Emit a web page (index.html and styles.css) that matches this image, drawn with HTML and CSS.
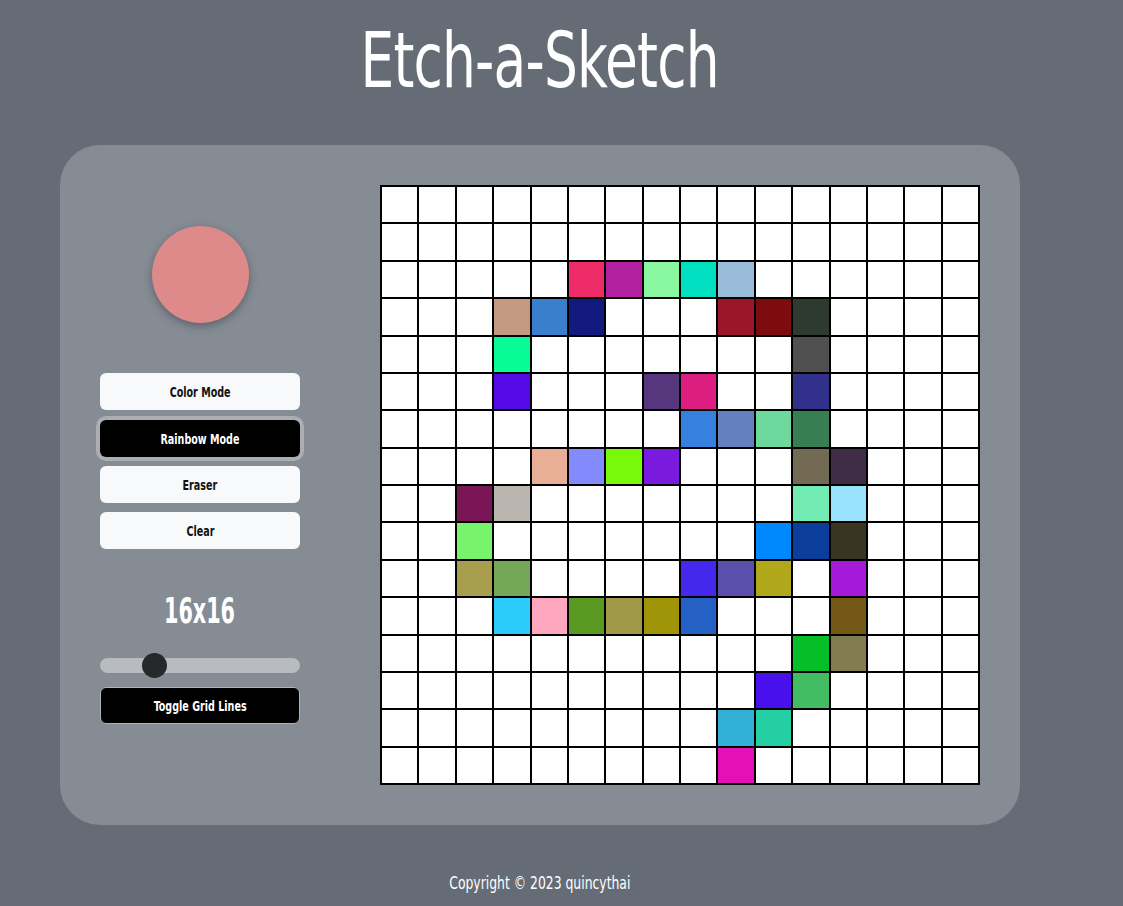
FILE: index.html
```html
<!DOCTYPE html>
<html lang="en">
<head>
<meta charset="utf-8">
<title>Etch-a-Sketch</title>
<link rel="stylesheet" href="styles.css">
</head>
<body>
<div class="page">
  <h1 class="title">Etch-a-Sketch</h1>
  <main class="panel">
    <section class="controls">
      <div class="swatch"></div>
      <div class="buttons">
        <button class="btn"><span class="lbl">Color Mode</span></button>
        <button class="btn active"><span class="lbl">Rainbow Mode</span></button>
        <button class="btn"><span class="lbl">Eraser</span></button>
        <button class="btn"><span class="lbl">Clear</span></button>
      </div>
      <div class="size-label">16x16</div>
      <input class="slider" type="range" min="1" max="64" value="16">
      <button class="btn toggle"><span class="lbl">Toggle Grid Lines</span></button>
    </section>
    <section class="grid">
      <div class="c"></div><div class="c"></div><div class="c"></div><div class="c"></div><div class="c"></div><div class="c"></div><div class="c"></div><div class="c"></div><div class="c"></div><div class="c"></div><div class="c"></div><div class="c"></div><div class="c"></div><div class="c"></div><div class="c"></div><div class="c"></div>
      <div class="c"></div><div class="c"></div><div class="c"></div><div class="c"></div><div class="c"></div><div class="c"></div><div class="c"></div><div class="c"></div><div class="c"></div><div class="c"></div><div class="c"></div><div class="c"></div><div class="c"></div><div class="c"></div><div class="c"></div><div class="c"></div>
      <div class="c"></div><div class="c"></div><div class="c"></div><div class="c"></div><div class="c"></div><div class="c" style="background:#ed2b68"></div><div class="c" style="background:#b3209f"></div><div class="c" style="background:#88f7a0"></div><div class="c" style="background:#00dfc0"></div><div class="c" style="background:#99bcdb"></div><div class="c"></div><div class="c"></div><div class="c"></div><div class="c"></div><div class="c"></div><div class="c"></div>
      <div class="c"></div><div class="c"></div><div class="c"></div><div class="c" style="background:#c49b81"></div><div class="c" style="background:#3a7fcb"></div><div class="c" style="background:#12197f"></div><div class="c"></div><div class="c"></div><div class="c"></div><div class="c" style="background:#9b1629"></div><div class="c" style="background:#7e0c0f"></div><div class="c" style="background:#2f3a2e"></div><div class="c"></div><div class="c"></div><div class="c"></div><div class="c"></div>
      <div class="c"></div><div class="c"></div><div class="c"></div><div class="c" style="background:#08fb94"></div><div class="c"></div><div class="c"></div><div class="c"></div><div class="c"></div><div class="c"></div><div class="c"></div><div class="c"></div><div class="c" style="background:#505050"></div><div class="c"></div><div class="c"></div><div class="c"></div><div class="c"></div>
      <div class="c"></div><div class="c"></div><div class="c"></div><div class="c" style="background:#5409e6"></div><div class="c"></div><div class="c"></div><div class="c"></div><div class="c" style="background:#56377d"></div><div class="c" style="background:#db1e80"></div><div class="c"></div><div class="c"></div><div class="c" style="background:#31308a"></div><div class="c"></div><div class="c"></div><div class="c"></div><div class="c"></div>
      <div class="c"></div><div class="c"></div><div class="c"></div><div class="c"></div><div class="c"></div><div class="c"></div><div class="c"></div><div class="c"></div><div class="c" style="background:#3680df"></div><div class="c" style="background:#6480bf"></div><div class="c" style="background:#6ed99c"></div><div class="c" style="background:#377e53"></div><div class="c"></div><div class="c"></div><div class="c"></div><div class="c"></div>
      <div class="c"></div><div class="c"></div><div class="c"></div><div class="c"></div><div class="c" style="background:#e9ae96"></div><div class="c" style="background:#838afb"></div><div class="c" style="background:#78f909"></div><div class="c" style="background:#7a1ade"></div><div class="c"></div><div class="c"></div><div class="c"></div><div class="c" style="background:#736a54"></div><div class="c" style="background:#3e2d44"></div><div class="c"></div><div class="c"></div><div class="c"></div>
      <div class="c"></div><div class="c"></div><div class="c" style="background:#7a1656"></div><div class="c" style="background:#bab6af"></div><div class="c"></div><div class="c"></div><div class="c"></div><div class="c"></div><div class="c"></div><div class="c"></div><div class="c"></div><div class="c" style="background:#72ecb2"></div><div class="c" style="background:#99e2fe"></div><div class="c"></div><div class="c"></div><div class="c"></div>
      <div class="c"></div><div class="c"></div><div class="c" style="background:#78f36c"></div><div class="c"></div><div class="c"></div><div class="c"></div><div class="c"></div><div class="c"></div><div class="c"></div><div class="c"></div><div class="c" style="background:#0088ff"></div><div class="c" style="background:#0b3e9c"></div><div class="c" style="background:#3a3522"></div><div class="c"></div><div class="c"></div><div class="c"></div>
      <div class="c"></div><div class="c"></div><div class="c" style="background:#a89e4e"></div><div class="c" style="background:#74a857"></div><div class="c"></div><div class="c"></div><div class="c"></div><div class="c"></div><div class="c" style="background:#4429ed"></div><div class="c" style="background:#5a4fab"></div><div class="c" style="background:#b0a71a"></div><div class="c"></div><div class="c" style="background:#a519db"></div><div class="c"></div><div class="c"></div><div class="c"></div>
      <div class="c"></div><div class="c"></div><div class="c"></div><div class="c" style="background:#2bcbfb"></div><div class="c" style="background:#fea7be"></div><div class="c" style="background:#5a9a22"></div><div class="c" style="background:#a09a48"></div><div class="c" style="background:#a09508"></div><div class="c" style="background:#2560c4"></div><div class="c"></div><div class="c"></div><div class="c"></div><div class="c" style="background:#745815"></div><div class="c"></div><div class="c"></div><div class="c"></div>
      <div class="c"></div><div class="c"></div><div class="c"></div><div class="c"></div><div class="c"></div><div class="c"></div><div class="c"></div><div class="c"></div><div class="c"></div><div class="c"></div><div class="c"></div><div class="c" style="background:#06bf28"></div><div class="c" style="background:#827a50"></div><div class="c"></div><div class="c"></div><div class="c"></div>
      <div class="c"></div><div class="c"></div><div class="c"></div><div class="c"></div><div class="c"></div><div class="c"></div><div class="c"></div><div class="c"></div><div class="c"></div><div class="c"></div><div class="c" style="background:#4710ed"></div><div class="c" style="background:#43bd64"></div><div class="c"></div><div class="c"></div><div class="c"></div><div class="c"></div>
      <div class="c"></div><div class="c"></div><div class="c"></div><div class="c"></div><div class="c"></div><div class="c"></div><div class="c"></div><div class="c"></div><div class="c"></div><div class="c" style="background:#33b0d6"></div><div class="c" style="background:#25cfa4"></div><div class="c"></div><div class="c"></div><div class="c"></div><div class="c"></div><div class="c"></div>
      <div class="c"></div><div class="c"></div><div class="c"></div><div class="c"></div><div class="c"></div><div class="c"></div><div class="c"></div><div class="c"></div><div class="c"></div><div class="c" style="background:#e411b6"></div><div class="c"></div><div class="c"></div><div class="c"></div><div class="c"></div><div class="c"></div><div class="c"></div>
    </section>
  </main>
  <footer class="footer">Copyright © 2023 quincythai</footer>
</div>
</body>
</html>
```

FILE: styles.css
```css
* { box-sizing: border-box; }

html, body {
  margin: 0;
  padding: 0;
  background: #666c76;
  height: 100%;
}

body {
  font-family: "DejaVu Sans Condensed", "DejaVu Sans", sans-serif;
  color: #fff;
  overflow: hidden;
}

.page {
  width: 1080px;
  display: flex;
  flex-direction: column;
  align-items: center;
}

.title {
  margin: 18px 0 0;
  height: 127px;
  font-size: 76px;
  font-weight: normal;
  line-height: 86px;
  letter-spacing: -1px;
  transform: scaleX(0.78);
}

.panel {
  width: 960px;
  height: 680px;
  background: #868c94;
  border-radius: 40px;
  padding: 40px;
  display: flex;
  gap: 80px;
}

.controls {
  width: 200px;
  display: flex;
  flex-direction: column;
  align-items: center;
  padding-top: 41px;
}

.swatch {
  width: 97px;
  height: 97px;
  border-radius: 50%;
  background: #de8a8a;
  box-shadow: 0 3px 8px rgba(40, 45, 55, 0.45);
  margin-bottom: 50px;
}

.buttons {
  width: 200px;
  display: flex;
  flex-direction: column;
  gap: 9px;
}

.btn {
  width: 200px;
  height: 37px;
  border: none;
  border-radius: 6px;
  background: #f8f9fa;
  color: #111;
  font-family: inherit;
  font-size: 14px;
  font-weight: bold;
  padding: 0;
}

.lbl {
  display: inline-block;
  transform: scaleX(0.76);
  white-space: nowrap;
}

.btn.active {
  background: #000;
  color: #fff;
  box-shadow: 0 0 0 4px #abaeb2;
  margin-top: 1px;
}

.size-label {
  margin-top: 42px;
  font-size: 36px;
  font-weight: bold;
  line-height: 40px;
  transform: scaleX(0.64);
}

.slider {
  -webkit-appearance: none;
  appearance: none;
  width: 200px;
  height: 15px;
  margin: 27px 0 0;
  background: #b8bbbf;
  border-radius: 8px;
  outline: none;
}

.slider::-webkit-slider-thumb {
  -webkit-appearance: none;
  appearance: none;
  width: 25px;
  height: 25px;
  border-radius: 50%;
  background: #25292c;
  border: none;
}

.btn.toggle {
  margin-top: 14px;
  background: #000;
  color: #fff;
  border: 1px solid #b0b3b7;
}

.grid {
  width: 600px;
  height: 600px;
  border: 1px solid #000;
  display: grid;
  grid-template-columns: repeat(16, 1fr);
  grid-template-rows: repeat(16, 1fr);
  background: #fff;
}

.c {
  border: 1px solid #000;
  background: #fff;
}

.footer {
  margin-top: 48px;
  font-size: 17px;
  line-height: 20px;
  transform: scaleX(0.81);
}
```
